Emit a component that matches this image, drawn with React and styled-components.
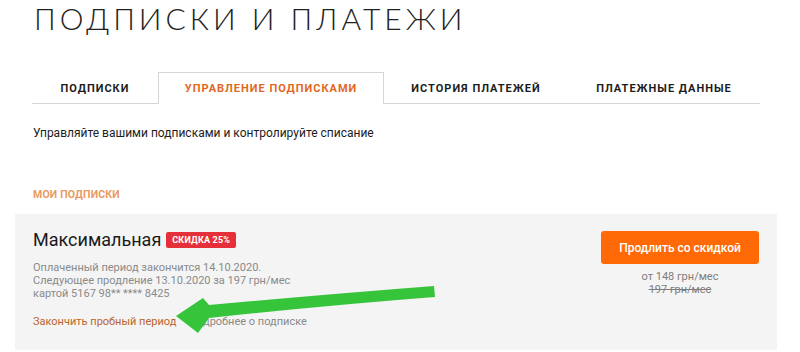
import React from "react";
import styled, { createGlobalStyle } from "styled-components";

const tabs = [
  { label: "ПОДПИСКИ", width: 126 },
  { label: "УПРАВЛЕНИЕ ПОДПИСКАМИ", width: 226, active: true },
  { label: "ИСТОРИЯ ПЛАТЕЖЕЙ", width: 184 },
  { label: "ПЛАТЕЖНЫЕ ДАННЫЕ", width: 192 },
];

function App() {
  return (
    <Page>
      <GlobalStyle />
      <Title>ПОДПИСКИ И ПЛАТЕЖИ</Title>

      <Tabs>
        {tabs.map((t) => (
          <Tab key={t.label} $active={t.active} $width={t.width}>
            {t.label}
          </Tab>
        ))}
      </Tabs>

      <Intro>Управляйте вашими подписками и контролируйте списание</Intro>

      <SectionLabel>МОИ ПОДПИСКИ</SectionLabel>

      <Card>
        <CardMain>
          <PlanRow>
            <PlanName>Максимальная</PlanName>
            <Badge>СКИДКА 25%</Badge>
          </PlanRow>
          <Info>
            Оплаченный период закончится 14.10.2020.
            <br />
            Следующее продление 13.10.2020 за 197 грн/мес
            <br />
            картой 5167 98** **** 8425
          </Info>
          <Links>
            <ActionLink $accent>Закончить пробный период</ActionLink>
            <ActionLink>Подробнее о подписке</ActionLink>
          </Links>
        </CardMain>
        <CardSide>
          <RenewButton>Продлить со скидкой</RenewButton>
          <Price>от 148 грн/мес</Price>
          <Price $old>197 грн/мес</Price>
        </CardSide>
      </Card>

      <Arrow viewBox="0 0 800 352" width="800" height="352">
        <path
          d="M434 286 Q330 294 209 305 L203 298 L176 316 L198 333 L209 318 Q330 305 435 297 Z"
          fill="#36c43a"
        />
      </Arrow>
    </Page>
  );
}

const GlobalStyle = createGlobalStyle`
  body {
    margin: 0;
    background: #ffffff;
    font-family: Roboto, "Noto Sans", Arial, sans-serif;
  }
`;

const Page = styled.div`
  position: relative;
  width: 800px;
  height: 352px;
  overflow: hidden;
  padding-left: 32px;
  box-sizing: border-box;
`;

const Title = styled.h1`
  margin: 0;
  height: 36px;
  line-height: 36px;
  font-family: Lato, "Open Sans", sans-serif;
  font-weight: 300;
  font-size: 30px;
  letter-spacing: 4px;
  color: #222;
  padding-left: 2px;
  white-space: nowrap;
`;

const Tabs = styled.div`
  display: flex;
  width: 728px;
  margin-top: 36px;
  border-bottom: 1px solid #d6d6d6;
`;

const Tab = styled.div`
  width: ${(p) => p.$width}px;
  height: ${(p) => (p.$active ? "32px" : "31px")};
  margin-bottom: ${(p) => (p.$active ? "-1px" : "0")};
  display: flex;
  align-items: center;
  justify-content: center;
  box-sizing: border-box;
  font-size: 11px;
  font-weight: 700;
  letter-spacing: 1px;
  color: ${(p) => (p.$active ? "#e2671f" : "#1d1d1d")};
  border: 1px solid ${(p) => (p.$active ? "#d6d6d6" : "transparent")};
  border-bottom: none;
  background: #fff;
`;

const Intro = styled.p`
  margin: 20px 0 0 1px;
  line-height: 18px;
  font-size: 12px;
  color: #1d1d1d;
`;

const SectionLabel = styled.div`
  margin-top: 46px;
  line-height: 14px;
  font-size: 10.5px;
  font-weight: 700;
  letter-spacing: 0.2px;
  color: #e89a62;
  padding-left: 1px;
`;

const Card = styled.div`
  display: flex;
  justify-content: space-between;
  margin: 12px 0 0 -17px;
  width: 762px;
  box-sizing: border-box;
  padding: 17px 18px 21px 18px;
  background: #f4f4f4;
`;

const CardMain = styled.div`
  display: flex;
  flex-direction: column;
`;

const PlanRow = styled.div`
  display: flex;
  align-items: center;
  gap: 5px;
  height: 17px;
`;

const PlanName = styled.span`
  font-size: 18px;
  line-height: 18px;
  color: #1a1a1a;
`;

const Badge = styled.span`
  background: #e5303a;
  color: #fff;
  font-size: 9px;
  font-weight: 700;
  padding: 0 6px;
  height: 16px;
  line-height: 16px;
  border-radius: 2px;
  letter-spacing: 0.2px;
`;

const Info = styled.div`
  margin-top: 13px;
  font-size: 11px;
  line-height: 13px;
  color: #8a8a8a;
`;

const Links = styled.div`
  display: flex;
  gap: 13px;
  margin-top: 15px;
  line-height: 14px;
`;

const ActionLink = styled.span`
  font-size: 11px;
  color: ${(p) => (p.$accent ? "#b9642c" : "#8a8a8a")};
`;

const CardSide = styled.div`
  width: 158px;
  display: flex;
  flex-direction: column;
  align-items: center;
`;

const RenewButton = styled.button`
  width: 158px;
  height: 33px;
  border: none;
  border-radius: 3px;
  background: #ff6a06;
  color: #fff;
  font-family: inherit;
  font-size: 12px;
  font-weight: 500;
  margin-bottom: 6px;
`;

const Price = styled.div`
  font-size: 11px;
  line-height: 13px;
  color: #7d7d7d;
  text-decoration: ${(p) => (p.$old ? "line-through" : "none")};
`;

const Arrow = styled.svg`
  position: absolute;
  left: 0;
  top: 0;
  pointer-events: none;
`;

export default App;
